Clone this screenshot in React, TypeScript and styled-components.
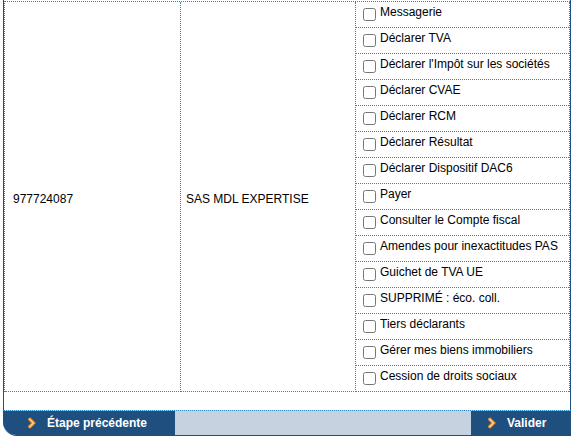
import React from "react";
import styled, { createGlobalStyle } from "styled-components";

const Global = createGlobalStyle`
  html, body { margin: 0; padding: 0; background: #fff; }
  body { font-family: "Liberation Sans", Arial, sans-serif; font-size: 12px; color: #000; }
`;

const DARK = "#1f4f7f";
const DOT = "#2e86bc";

const Frame = styled.div`
  margin-left: 3px;
  width: 566px;
  padding-top: 1px;
  padding-bottom: 18px;
  border-left: 1px solid ${DARK};
  border-right: 1px solid ${DARK};
`;

const Table = styled.div`
  display: grid;
  grid-template-columns: 176px 175px 214px;
  border-top: 1px dotted ${DOT};
  border-left: 1px dotted ${DOT};
`;

const Cell = styled.div<{ $pl: number }>`
  display: flex;
  align-items: center;
  padding: 4px 0 0 ${(p) => p.$pl}px;
  border-right: 1px dotted ${DOT};
  border-bottom: 1px dotted ${DOT};
`;

const ListCell = styled.div`
  display: flex;
  flex-direction: column;
  border-right: 1px dotted ${DOT};
`;

const Row = styled.label`
  display: flex;
  align-items: flex-start;
  height: 25px;
  border-bottom: 1px dotted ${DOT};
`;

const Check = styled.input`
  width: 13px;
  height: 13px;
  margin: 6px 4px 0 7px;
  flex: none;
`;

const Label = styled.span`
  margin-top: 3px;
  line-height: 14px;
  white-space: nowrap;
`;

const Footer = styled.div`
  margin-left: 3px;
  width: 568px;
  height: 24px;
  display: flex;
  background: #c6d2e0;
  border-top: 1px dotted ${DOT};
  border-bottom: 1px solid ${DARK};
  border-bottom-left-radius: 14px;
  overflow: hidden;
`;

const Button = styled.button<{ $w: number; $pl: number }>`
  width: ${(p) => p.$w}px;
  height: 100%;
  display: flex;
  align-items: center;
  gap: 11px;
  padding: 0 0 0 ${(p) => p.$pl}px;
  border: none;
  background: ${DARK};
  color: #fff;
  font-family: "Liberation Sans", Arial, sans-serif;
  font-size: 12px;
  font-weight: bold;
  cursor: pointer;
`;

const Spacer = styled.div`
  flex: 1;
`;

const Chevron = () => (
  <svg width="9" height="12" viewBox="0 0 9 12">
    <path d="M2 1.5 L6.5 6 L2 10.5" fill="none" stroke="#f28c1c" strokeWidth="3.4" strokeLinejoin="miter" />
    <path d="M2 1.5 L6.5 6 L2 10.5" fill="none" stroke="#fff" strokeWidth="1" strokeLinejoin="miter" />
  </svg>
);

const items = [
  "Messagerie",
  "Déclarer TVA",
  "Déclarer l'Impôt sur les sociétés",
  "Déclarer CVAE",
  "Déclarer RCM",
  "Déclarer Résultat",
  "Déclarer Dispositif DAC6",
  "Payer",
  "Consulter le Compte fiscal",
  "Amendes pour inexactitudes PAS",
  "Guichet de TVA UE",
  "SUPPRIMÉ : éco. coll.",
  "Tiers déclarants",
  "Gérer mes biens immobiliers",
  "Cession de droits sociaux",
];

export default function App() {
  return (
    <>
      <Global />
      <Frame>
        <Table>
          <Cell $pl={8}>977724087</Cell>
          <Cell $pl={5}>SAS MDL EXPERTISE</Cell>
          <ListCell>
            {items.map((t) => (
              <Row key={t}>
                <Check type="checkbox" />
                <Label>{t}</Label>
              </Row>
            ))}
          </ListCell>
        </Table>
      </Frame>
      <Footer>
        <Button $w={172} $pl={24}>
          <Chevron />
          Étape précédente
        </Button>
        <Spacer />
        <Button $w={100} $pl={16}>
          <Chevron />
          Valider
        </Button>
      </Footer>
    </>
  );
}
